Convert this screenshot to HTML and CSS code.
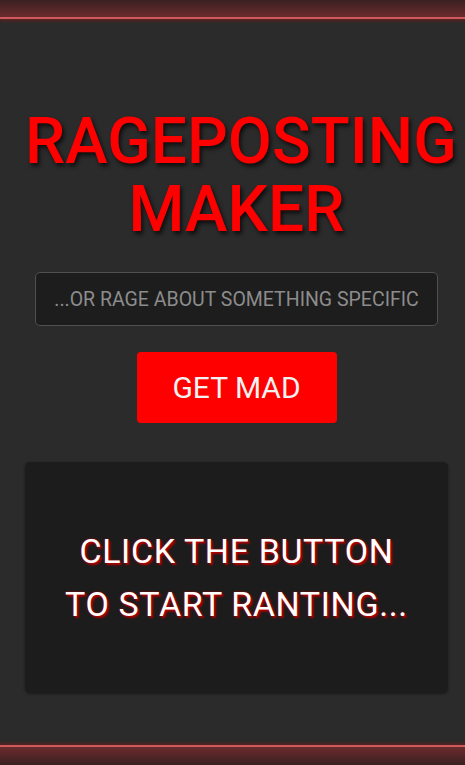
FILE: index.html
```html
<!DOCTYPE html>
<html>
<head>
<meta charset="utf-8">
<link rel="stylesheet" href="styles.css">
</head>
<body>
<div class="page">
  <header class="topbar"></header>
  <main class="content">
    <h1 class="title">RAGEPOSTING<br>MAKER</h1>
    <input class="topic" type="text" placeholder="...OR RAGE ABOUT SOMETHING SPECIFIC">
    <button class="mad">GET MAD</button>
    <section class="output">
      <p class="rant">CLICK THE BUTTON<br>TO START RANTING...</p>
    </section>
  </main>
  <footer class="bottombar"></footer>
</div>
</body>
</html>
```
FILE: styles.css
```css
html, body {
  margin: 0;
  padding: 0;
  background: #2b2b2b;
  height: 100%;
  overflow: hidden;
}
.page {
  height: 765px;
  display: flex;
  flex-direction: column;
  font-family: Roboto, "Liberation Sans", sans-serif;
}
.topbar {
  height: 17px;
  flex: none;
  background: linear-gradient(to bottom, #3a2121, #6b2b2d);
  border-bottom: 2px solid #cf5a5e;
  box-shadow: 0 2px 3px rgba(110, 30, 30, 0.8);
}
.content {
  flex: 1;
  display: flex;
  flex-direction: column;
  align-items: center;
  padding: 89px 17px 0 25px;
}
.title {
  margin: 0;
  width: 423px;
  text-align: center;
  color: #ff0000;
  font-size: 64px;
  line-height: 68px;
  font-weight: 500;
  white-space: nowrap;
  text-shadow: 2px 3px 4px rgba(0, 0, 0, 0.7);
}
.topic {
  margin-top: 28px;
  width: 403px;
  height: 54px;
  box-sizing: border-box;
  background: #1d1d1d;
  border: 1.5px solid #505050;
  border-radius: 5px;
  text-align: center;
  font-family: Roboto, "Liberation Sans", sans-serif;
  font-size: 19.5px;
  color: #ddd;
  outline: none;
  padding: 0;
}
.topic::placeholder {
  color: #8c8c8c;
}
.mad {
  margin-top: 26px;
  width: 200px;
  height: 71px;
  border: none;
  border-radius: 4px;
  background: #ff0000;
  color: #f2f2f2;
  font-family: Roboto, "Liberation Sans", sans-serif;
  font-size: 30px;
}
.output {
  margin-top: 39px;
  width: 423px;
  height: 231px;
  background: #1c1c1c;
  border-radius: 5px;
  box-shadow: 0 1px 3px rgba(0, 0, 0, 0.4);
  display: flex;
  align-items: center;
  justify-content: center;
}
.rant {
  margin: 0;
  text-align: center;
  color: #ffffff;
  font-size: 34px;
  letter-spacing: 0.6px;
  line-height: 53px;
  text-shadow: 0 0 2px #d00000, 2px 2px 2px #b00000;
}
.bottombar {
  height: 18px;
  flex: none;
  border-top: 2px solid #cf5a5e;
  background: linear-gradient(to bottom, #6b2b2d, #3a2121);
  box-shadow: 0 -2px 3px rgba(110, 30, 30, 0.6);
}
```
